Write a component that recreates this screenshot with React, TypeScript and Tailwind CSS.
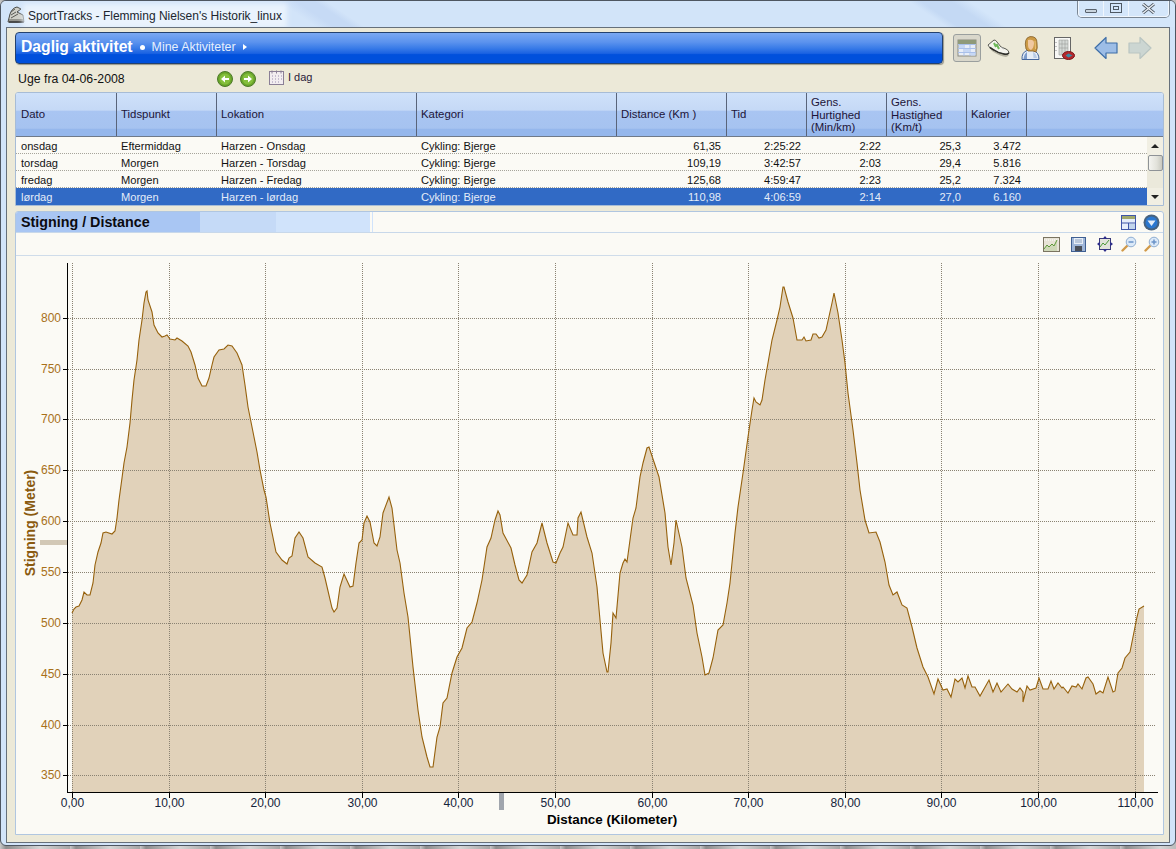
import React from "react";

const FONT = '"Liberation Sans", Arial, sans-serif';

const TRACE: [number, number][] = [
[72,613],[74,609],[76,607],[79,606],[82,600],[84,592],[87,595],[90,595],[93,583],[95,565],[98,552],[101,543],[103,533],[106,532],[112,534],[115,531],[117,518],[119,500],[122,478],[124,463],[127,447],[130,423],[132,400],[134,380],[137,360],[139,340],[142,320],[144,303],[146,292],[147,291],[148,300],[152,312],[154,325],[158,333],[162,337],[165,336],[167,335],[170,339],[175,340],[177,338],[182,341],[188,346],[191,352],[195,365],[198,378],[202,386],[206,386],[209,378],[212,365],[214,357],[219,350],[224,349],[228,345],[232,346],[237,353],[242,365],[245,385],[248,407],[252,427],[257,452],[260,470],[264,490],[266,497],[270,523],[276,552],[282,560],[287,564],[289,558],[292,556],[295,538],[299,532],[303,538],[308,557],[315,563],[322,567],[325,578],[332,608],[334,612],[337,608],[340,587],[344,574],[350,587],[353,586],[356,563],[359,543],[362,540],[364,523],[367,516],[370,522],[374,543],[377,546],[380,537],[383,513],[389,497],[392,508],[397,550],[400,563],[404,593],[408,617],[413,667],[418,710],[422,737],[427,757],[430,767],[433,767],[437,737],[440,727],[443,703],[447,698],[452,673],[457,657],[462,648],[467,628],[472,622],[477,603],[482,580],[487,547],[491,538],[495,520],[498,511],[500,515],[503,533],[511,548],[515,565],[519,580],[522,583],[527,575],[532,552],[537,543],[542,523],[547,543],[553,562],[556,563],[560,553],[563,547],[568,523],[573,535],[577,535],[578,518],[581,512],[587,537],[592,553],[597,587],[600,620],[603,653],[607,672],[608,672],[611,643],[613,613],[616,618],[620,573],[623,563],[625,559],[627,562],[630,540],[633,518],[636,508],[640,477],[643,463],[647,448],[649,447],[654,462],[659,477],[665,513],[668,547],[671,565],[674,543],[676,520],[682,547],[686,578],[693,605],[697,633],[702,657],[705,675],[709,673],[713,658],[718,630],[723,625],[727,603],[730,583],[735,533],[738,507],[743,473],[748,437],[752,410],[754,398],[756,402],[760,405],[762,400],[765,380],[768,363],[772,340],[777,320],[780,307],[783,287],[784,287],[788,302],[793,318],[797,340],[802,340],[804,337],[806,341],[811,340],[813,334],[816,334],[819,338],[822,337],[826,330],[832,303],[834,293],[838,313],[842,340],[845,363],[848,393],[853,430],[857,463],[860,490],[865,520],[869,533],[876,532],[880,542],[885,562],[889,585],[893,595],[897,592],[902,605],[907,608],[912,627],[917,648],[923,667],[928,677],[934,694],[938,679],[943,690],[947,689],[951,697],[955,679],[958,682],[962,678],[965,688],[968,676],[972,687],[975,687],[980,696],[989,680],[993,692],[997,683],[1001,692],[1008,684],[1012,689],[1017,692],[1020,688],[1023,692],[1023,702],[1027,686],[1030,690],[1036,688],[1039,678],[1043,689],[1048,689],[1051,681],[1054,689],[1058,683],[1062,688],[1063,687],[1068,693],[1072,686],[1076,687],[1078,684],[1082,689],[1086,678],[1088,677],[1093,684],[1096,694],[1100,691],[1103,693],[1108,677],[1113,692],[1115,691],[1118,673],[1122,668],[1125,658],[1130,652],[1133,637],[1137,617],[1139,609],[1144,606]];

const LINE = TRACE.map(([x, y]) => `${x},${y}`).join(" ");
const AREA = `72,792 ${LINE} 1144,606 1144,792`;

const YT: [string, number][] = [["800",318],["750",369],["700",419],["650",470],["600",521],["550",572],["500",623],["450",674],["400",725],["350",775]];
const XT: [string, number][] = [["0,00",72],["10,00",169],["20,00",265],["30,00",362],["40,00",458],["50,00",555],["60,00",652],["70,00",748],["80,00",845],["90,00",941],["100,00",1038],["110,00",1135]];

const COLS = "grid-cols-[101px_100px_200px_200px_110px_80px_80px_80px_60px_1fr]";

const HEAD: { t: string[]; p: string }[] = [
  { t: ["Dato"], p: "pl-[5px]" },
  { t: ["Tidspunkt"], p: "pl-[4px]" },
  { t: ["Lokation"], p: "pl-[4px]" },
  { t: ["Kategori"], p: "pl-[4px]" },
  { t: ["Distance (Km )"], p: "pl-[4px]" },
  { t: ["Tid"], p: "pl-[4px]" },
  { t: ["Gens.", "Hurtighed", "(Min/km)"], p: "pl-[4px] pt-[1px]" },
  { t: ["Gens.", "Hastighed", "(Km/t)"], p: "pl-[4px] pt-[1px]" },
  { t: ["Kalorier"], p: "pl-[4px]" },
];

const ROWS = [
  ["onsdag","Eftermiddag","Harzen - Onsdag","Cykling: Bjerge","61,35","2:25:22","2:22","25,3","3.472"],
  ["torsdag","Morgen","Harzen - Torsdag","Cykling: Bjerge","109,19","3:42:57","2:03","29,4","5.816"],
  ["fredag","Morgen","Harzen - Fredag","Cykling: Bjerge","125,68","4:59:47","2:23","25,2","7.324"],
  ["lørdag","Morgen","Harzen - lørdag","Cykling: Bjerge","110,98","4:06:59","2:14","27,0","6.160"],
];

function Shoe() {
  return (
    <svg width="23" height="20" viewBox="0 0 23 20">
      <path d="M2 9 L22 17.5 L19 19 Q12 18 5 13 Z" fill="#8c8a7c" opacity="0.6" />
      <path d="M1 7 L7 2 Q9 2 10 4 L14 9 L19 11 Q22 12.5 22 15 Q20 17 17 16 Q11 15 7 12 L3 10 Z" fill="#f4f4ee" stroke="#4c4c44" strokeWidth="0.9" />
      <path d="M7 5 L9 9 M9.5 6 L12 11" stroke="#6db85a" strokeWidth="2" />
      <path d="M3 9.5 L7 12 Q11 15 17 16 Q20 17 22 15" fill="none" stroke="#2f2f2a" strokeWidth="1.5" />
      <path d="M14 9 L17 11" stroke="#aaa" strokeWidth="1" />
    </svg>
  );
}

function Person() {
  return (
    <svg width="19" height="24" viewBox="0 0 19 24">
      <path d="M1 23.5 Q0.5 16.5 6 14.5 L12 14.5 Q18 16 18 23.5 Z" fill="#e6edf6" stroke="#44669c" strokeWidth="1" />
      <path d="M2.5 23 Q3 18 6 16 L6 23 Z" fill="#7d9ccb" />
      <path d="M12 16 Q15 17 16 22 L12.5 22 Z" fill="#b9cce6" />
      <path d="M5 13 Q2.5 2 9 0.6 Q16 0 16 7 Q17 12 15 16 L12 15 L7 15 Z" fill="#cc9a45" stroke="#84602a" strokeWidth="0.8" />
      <path d="M7 4 Q13 3 13 7 Q13 12 10 14 Q7 13 7 9 Z" fill="#f0c8a0" />
      <path d="M14 5 L14.5 13" stroke="#e8c47a" />
    </svg>
  );
}

function Report() {
  return (
    <svg width="22" height="24" viewBox="0 0 22 24">
      <rect x="1.5" y="0.5" width="16" height="21" fill="#f8f8f6" stroke="#666" />
      <path d="M6 3 H15 V18 H6 Z M9 3 V18 M12 3 V18 M6 7 H15 M6 11 H15" fill="#d5d9d6" stroke="#9aa09c" strokeWidth="0.6" />
      <path d="M3 5 v1 M3 9 v1 M3 13 v1" stroke="#888" />
      <ellipse cx="15.5" cy="18.5" rx="6" ry="4" fill="#b3272c" stroke="#7d1518" />
      <path d="M12.5 18.5 L15.5 16.5 L19.5 18.5 L15.5 20.5 Z" fill="#3a88a5" />
    </svg>
  );
}

function Arrow({ right, fill, stroke }: { right?: boolean; fill: string; stroke: string }) {
  return (
    <svg width="24" height="24" viewBox="0 0 24 24" className={right ? "-scale-x-100" : ""}>
      <path d="M1 12 L12 1.5 V7 H23 V17 H12 V22.5 Z" fill={fill} stroke={stroke} strokeWidth="1.2" strokeLinejoin="round" />
    </svg>
  );
}

function GridIcon() {
  return (
    <svg width="20" height="18" viewBox="0 0 20 18">
      <rect x="1" y="1" width="18" height="16" fill="#e8eef8" stroke="#8b8b80" />
      <rect x="1" y="1" width="18" height="4" fill="#8f9a7a" />
      <path d="M1 5.5 H19 M1 9.5 H19 M1 13.5 H19 M7 5 V17 M13 5 V17" stroke="#a9c0ea" strokeWidth="1" />
      <rect x="2" y="6" width="4.5" height="3" fill="#c6d8f6" /><rect x="8" y="10" width="4.5" height="3" fill="#c6d8f6" /><rect x="14" y="14" width="4.5" height="2.6" fill="#c6d8f6" />
    </svg>
  );
}

function Green({ right }: { right?: boolean }) {
  return (
    <svg width="16" height="16" viewBox="0 0 16 16" className="mt-[2px]">
      <circle cx="8" cy="8" r="7.5" fill="#6aa52a" stroke="#4d7a2a" />
      <circle cx="8" cy="8" r="5.5" fill="#84bf3c" />
      <path d={right ? "M4 7 H8 V4.5 L12 8 L8 11.5 V9 H4 Z" : "M12 7 H8 V4.5 L4 8 L8 11.5 V9 H12 Z"} fill="#fff" />
    </svg>
  );
}

function Calendar() {
  return (
    <svg width="15" height="15" viewBox="0 0 15 15">
      <rect x="0.5" y="1.5" width="14" height="13" fill="#f2edf0" stroke="#8a7f96" />
      <path d="M3 0.5 v3 M7.5 0.5 v3 M12 0.5 v3" stroke="#8a7f96" />
      <path d="M3 6 h1 M6 6 h1 M9 6 h1 M12 6 h1 M3 9 h1 M6 9 h1 M9 9 h1 M12 9 h1 M3 12 h1 M6 12 h1 M9 12 h1" stroke="#9a8fb0" />
    </svg>
  );
}

function Scrollbar() {
  return (
    <div className="w-[16px] h-full bg-[#f1efe3] flex flex-col items-center">
      <div className="h-[18px] flex items-center justify-center">
        <div className="w-0 h-0 border-x-[4px] border-x-transparent border-b-[4px] border-b-[#222]" />
      </div>
      <div className="w-[15px] h-[16px] rounded-[2px] border border-[#8e9296] bg-[linear-gradient(90deg,#f4f4f0,#e2e2da_60%,#c9c9c0)]" />
      <div className="flex-1 bg-[#ebe9db] w-full" />
      <div className="h-[17px] flex items-center justify-center">
        <div className="w-0 h-0 border-x-[4px] border-x-transparent border-t-[4px] border-t-[#222]" />
      </div>
    </div>
  );
}

function Chart() {
  return (
    <svg width="1147" height="578" viewBox="16 256 1147 578" style={{ fontFamily: FONT }} className="block">
      <polygon points={AREA} fill="#e1d2ba" />
      {YT.map(([, y]) => (
        <line key={y} x1="68" x2="1156" y1={y + 0.5} y2={y + 0.5} stroke="#8a8272" strokeDasharray="1 1" />
      ))}
      {XT.map(([, x]) => (
        <line key={x} x1={x + 0.5} x2={x + 0.5} y1="263" y2="792" stroke="#8a8272" strokeDasharray="1 1" />
      ))}
      <polyline points={LINE} fill="none" stroke="#96610c" strokeWidth="1.1" />
      <line x1="67.5" x2="67.5" y1="263" y2="793" stroke="#000" />
      <line x1="67" x2="1158" y1="792.5" y2="792.5" stroke="#000" />
      {YT.map(([t, y]) => (
        <g key={t}>
          <line x1="63" x2="68" y1={y + 0.5} y2={y + 0.5} stroke="#000" />
          <text x="61" y={y + 4} textAnchor="end" fontSize="12" fill="#a8701a">{t}</text>
        </g>
      ))}
      {XT.map(([t, x]) => (
        <g key={t}>
          <line x1={x + 0.5} x2={x + 0.5} y1="793" y2="798" stroke="#000" />
          <text x={x + 0.5} y="807" textAnchor="middle" fontSize="12" fill="#14233a">{t}</text>
        </g>
      ))}
      <rect x="40" y="540" width="27" height="5" fill="#d2c8b6" />
      <rect x="499" y="793" width="5" height="17" fill="#a0a5ad" />
      <text x="612" y="824" textAnchor="middle" fontSize="13.4" fontWeight="700" fill="#000">Distance (Kilometer)</text>
      <text transform="translate(35 523) rotate(-90)" textAnchor="middle" fontSize="14" fontWeight="700" fill="#8a5a10">Stigning (Meter)</text>
    </svg>
  );
}

export default function App() {
  return (
    <div className="relative w-[1176px] h-[849px] overflow-hidden bg-[repeating-linear-gradient(90deg,#c8c8c8_0,#8d8d8d_6px,#d6d6d6_40px,#a4a4a4_70px)]" style={{ fontFamily: FONT }}>
      <div className="w-[1176px] h-[846px] rounded-[6px] border border-[#4e5661] bg-[#d2e4f9] flex flex-col overflow-hidden">
        <div className="h-[26px] shrink-0 flex items-start justify-between pl-[5px] pr-[6px] bg-[linear-gradient(34deg,#d2e4f9_0,#d2e4f9_26%,#c6daf5_27.5%,#c6daf5_29%,#d2e4f9_30%,#d2e4f9_78%,#c4d9f4_79%,#c4d9f4_81.5%,#d4e6fa_83%,#d4e6fa_100%)]">
          <div className="flex items-center gap-[2px] h-[26px]">
            <svg width="20" height="20" viewBox="0 0 20 20">
              <path d="M2 18 L4 10 Q6 4 11 3 L15 5 L11 8 L17 11 L18 18 Z" fill="#cfcfc8" stroke="#4a4a46" />
              <path d="M5 8 L9 5 M5 11 L10 8 M5 14 L12 10 M3 16 H18" stroke="#5a5a55" />
              <path d="M3 18 H18" stroke="#333" strokeWidth="1.4" />
            </svg>
            <span className="text-[12px] text-[#20262e] leading-[14px] mt-[3px] bg-[#eaf3fd] shadow-[0_0_5px_5px_#eaf3fd]">SportTracks - Flemming Nielsen's Historik_linux</span>
          </div>
          <div className="flex h-[17px] border border-t-0 border-[#f0f6fd] rounded-b-[4px] shadow-[0_0_0_1px_#7b8794] -mt-px">
            <div className="w-[25px] flex items-end justify-center pb-[3px] border-r border-[#f0f6fd]">
              <div className="w-[12px] h-[4px] rounded-[1px] bg-[#c9d4de] border border-[#59626d]" />
            </div>
            <div className="w-[25px] flex items-center justify-center border-r border-[#f0f6fd]">
              <div className="w-[12px] h-[10px] border border-[#4f5964] flex items-center justify-center">
                <div className="w-[6px] h-[4px] border border-[#4f5964]" />
              </div>
            </div>
            <div className="w-[39px] flex items-center justify-center">
              <svg width="13" height="11" viewBox="0 0 13 11"><path d="M1 1 L12 10 M12 1 L1 10" stroke="#4f5964" strokeWidth="3" /><path d="M1 1 L12 10 M12 1 L1 10" stroke="#e8edf3" strokeWidth="1.4" /></svg>
            </div>
          </div>
        </div>

        <div className="ml-[5px] w-[1164px] h-[816px] shrink-0 border border-[#66707b] bg-[#ece9d8] pl-[8px] pr-[5px] pt-[4px] flex flex-col">
          <div className="h-[32px] shrink-0 flex items-start">
            <div className="w-[928px] h-[32px] rounded-[4px] border border-[#23416f] shadow-[1px_1px_1px_#9a978a] bg-[linear-gradient(#7aa8f2_0,#5c93ee_30%,#3a7ce8_50%,#1a62e2_68%,#0050dc_72%,#0050dc_100%)] flex items-center pl-[5px] pb-[2px] text-white">
              <span className="text-[15.7px] font-bold leading-none">Daglig aktivitet</span>
              <span className="w-[5px] h-[5px] rounded-full bg-white ml-[7px]" />
              <span className="text-[12.4px] leading-none ml-[7px] text-[#e6effc]">Mine Aktiviteter</span>
              <span className="ml-[7px] w-0 h-0 border-y-[3px] border-y-transparent border-l-[4px] border-l-white" />
            </div>
            <div className="ml-[10px] w-[28px] h-[28px] mt-[2px] rounded-[3px] border border-[#9a9f9e] bg-[#d9d7cb] flex items-center justify-center">
              <GridIcon />
            </div>
            <div className="ml-[6px] mt-[6px] w-[23px]"><Shoe /></div>
            <div className="ml-[11px] mt-[4px]"><Person /></div>
            <div className="ml-[13px] mt-[5px]"><Report /></div>
            <div className="ml-[19px] mt-[4px]"><Arrow fill="#9dbde6" stroke="#3f6fa8" /></div>
            <div className="ml-[10px] mt-[4px]"><Arrow right fill="#ccd6d2" stroke="#b9c5c2" /></div>
          </div>

          <div className="h-[28px] shrink-0 relative flex items-center pl-[3px] text-[#111] pb-[1px]">
            <span className="w-[199px] pt-[4px] text-[12.3px]">Uge fra 04-06-2008</span>
            <Green />
            <span className="w-[7px]" />
            <Green right />
            <span className="w-[13px]" />
            <Calendar />
            <span className="ml-[4px] text-[11px] text-[#2a1a3a]">I dag</span>
          </div>

          <div className="h-[114px] shrink-0 rounded-t-[3px] border border-[#a7bcd6] bg-[#fbfaf5] flex flex-col overflow-hidden">
            <div className={`grid ${COLS} h-[44px] shrink-0 border-b border-[#6f7a89] bg-[linear-gradient(#cfe1fa_0,#c5d9f6_40%,#a9c5f2_42%,#a6c3f0_82%,#95b7ec_84%,#95b7ec_100%)]`}>
              {HEAD.map((h) => (
                <div key={h.t[0] + h.t[1]} className={`border-r border-[#59647a] h-full flex flex-col justify-center text-[11.4px] leading-[12.5px] text-[#1c1438] ${h.p}`}>
                  {h.t.map((l) => <span key={l} className="whitespace-nowrap">{l}</span>)}
                </div>
              ))}
              <div />
            </div>
            <div className="flex flex-1 min-h-0">
              <div className="w-[1131px]">
                {ROWS.map((r, ri) => (
                  <div key={r[0]} className={`grid ${COLS} h-[17px] text-[11.1px] leading-[17px] ${ri === 3 ? "bg-[#316ac5] text-[#e4ecf8]" : "border-b border-dotted border-[#a6a49a] text-[#111]"}`}>
                    {r.map((c, i) => (
                      <div key={i} className={`pt-[1px] ${i < 4 ? (i === 0 ? "pl-[5px]" : "pl-[4px]") : "text-right pr-[6px]"}`}>{c}</div>
                    ))}
                    <div />
                  </div>
                ))}
              </div>
              <Scrollbar />
            </div>
          </div>

          <div className="mt-[5px] h-[624px] shrink-0 rounded-t-[3px] border border-[#b0c6e0] bg-[#fbfaf5] flex flex-col overflow-hidden">
            <div className="h-[21px] shrink-0 flex border-b border-[#c8d8ea]">
              <div className="w-[184px] bg-[#a9c6f3] pl-[5px] pt-[1px] flex items-center text-[14.3px] font-bold text-[#0b0b10]">Stigning / Distance</div>
              <div className="w-[76px] bg-[#c5daf7]" />
              <div className="w-[96px] bg-[#d0e3fb] border-r-[2px] border-[#fbfaf5]" />
              <div className="w-[1px] bg-[#d0e3fb]" />
              <div className="flex-1 flex items-center justify-end pr-[3px] gap-[7px]">
                <svg width="15" height="15" viewBox="0 0 15 15">
                  <rect x="0.5" y="0.5" width="14" height="14" fill="#e6eefa" stroke="#3f56a8" />
                  <rect x="1" y="1" width="13" height="3" fill="#a0a86c" />
                  <path d="M1 8 H14 M7.5 8 V14" stroke="#3f56a8" />
                  <rect x="8" y="9" width="6" height="5" fill="#c2d5ec" />
                </svg>
                <svg width="17" height="17" viewBox="0 0 17 17">
                  <circle cx="8.5" cy="8.5" r="8" fill="#47627f" />
                  <circle cx="8.5" cy="8.5" r="6" fill="#2b77cf" />
                  <path d="M4.5 6.5 H12.5 L8.5 12 Z" fill="#e6eef8" />
                </svg>
              </div>
            </div>
            <div className="h-[23px] shrink-0 flex items-center justify-end border-b border-[#cfdcea] pr-[3px]">
              <svg width="17" height="15" viewBox="0 0 17 15">
                <rect x="0.5" y="0.5" width="16" height="14" fill="#e7e3d6" stroke="#7a7461" />
                <path d="M1 3 H16" stroke="#fff" strokeDasharray="1 1" />
                <path d="M1 12 L4 8 L6 10 L9 7 L11 9 L14 3 V14 H1 Z" fill="#cfd8b8" />
                <path d="M1 12 L4 8 L6 10 L9 7 L11 9 L14 3" fill="none" stroke="#5e9a3a" />
              </svg>
              <svg className="ml-[11px]" width="15" height="15" viewBox="0 0 15 15">
                <rect x="0.5" y="0.5" width="14" height="14" fill="#9fb6d8" stroke="#3f5f92" />
                <rect x="3" y="1" width="9" height="6" fill="#e8eef6" />
                <path d="M4 3 H11 M4 5 H11" stroke="#8aa0c0" />
                <rect x="4" y="9" width="7" height="5" fill="#4a4f58" />
              </svg>
              <svg className="ml-[11px]" width="16" height="16" viewBox="0 0 16 16">
                <rect x="2.5" y="2.5" width="11" height="11" fill="#e3e3da" stroke="#3a3a7a" />
                <path d="M3 11 L6 7 L8 9 L12 4" fill="none" stroke="#4f9a3a" />
                <path d="M8 0 L10.5 3 H5.5 Z M8 16 L10.5 13 H5.5 Z M0 8 L3 5.5 V10.5 Z M16 8 L13 5.5 V10.5 Z" fill="#2f2f8a" />
              </svg>
              <svg className="ml-[8px]" width="16" height="16" viewBox="0 0 16 16">
                <path d="M1.5 14.5 L6 10" stroke="#d19a4a" strokeWidth="2.4" strokeLinecap="round" />
                <circle cx="10" cy="6" r="4.8" fill="#dbe9f8" stroke="#8fadd0" />
                <path d="M7.5 6 H12.5" stroke="#6b93c8" strokeWidth="1.5" />
              </svg>
              <svg className="ml-[7px]" width="16" height="16" viewBox="0 0 16 16">
                <path d="M1.5 14.5 L6 10" stroke="#d19a4a" strokeWidth="2.4" strokeLinecap="round" />
                <circle cx="10" cy="6" r="4.8" fill="#dbe9f8" stroke="#8fadd0" />
                <path d="M7.5 6 H12.5 M10 3.5 V8.5" stroke="#6b93c8" strokeWidth="1.5" />
              </svg>
            </div>
            <Chart />
          </div>
        </div>
      </div>
    </div>
  );
}
